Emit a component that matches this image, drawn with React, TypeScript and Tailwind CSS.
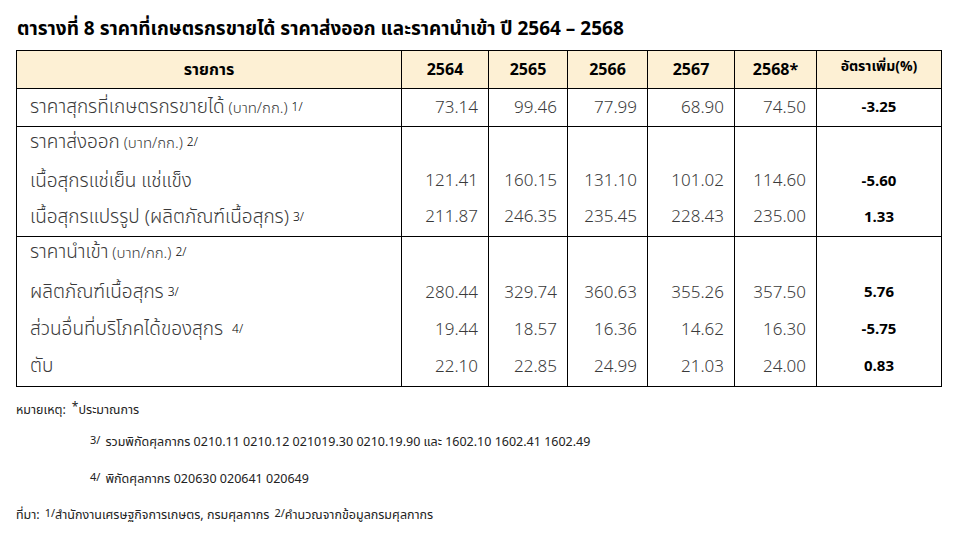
import React from 'react';

type Line = { label: React.ReactNode; values: string[]; rate: string; head?: boolean };

const unit = <span className="text-[15px]"> (บาท/กก.)</span>;
const sup = (t: string) => <sup className="text-[12px] ml-[4px] relative -top-[2px] text-black">{t}</sup>;

const row1: Line = {
  label: (
    <>
      ราคาสุกรที่เกษตรกรขายได้{unit}
      {sup('1/')}
    </>
  ),
  values: ['73.14', '99.46', '77.99', '68.90', '74.50'],
  rate: '-3.25',
};

const exportRows: Line[] = [
  { label: <>ราคาส่งออก{unit}{sup('2/')}</>, values: [], rate: '', head: true },
  { label: 'เนื้อสุกรแช่เย็น แช่แข็ง', values: ['121.41', '160.15', '131.10', '101.02', '114.60'], rate: '-5.60' },
  { label: <>เนื้อสุกรแปรรูป (ผลิตภัณฑ์เนื้อสุกร){sup('3/')}</>, values: ['211.87', '246.35', '235.45', '228.43', '235.00'], rate: '1.33' },
];

const importRows: Line[] = [
  { label: <>ราคานำเข้า{unit}{sup('2/')}</>, values: [], rate: '', head: true },
  { label: <>ผลิตภัณฑ์เนื้อสุกร{sup('3/')}</>, values: ['280.44', '329.74', '360.63', '355.26', '357.50'], rate: '5.76' },
  { label: <>ส่วนอื่นที่บริโภคได้ของสุกร {sup('4/')}</>, values: ['19.44', '18.57', '16.36', '14.62', '16.30'], rate: '-5.75' },
  { label: 'ตับ', values: ['22.10', '22.85', '24.99', '21.03', '24.00'], rate: '0.83' },
];

const years = ['2564', '2565', '2566', '2567', '2568*'];

// one section = one table row, each cell stacks its lines
function Section({ lines, last }: { lines: Line[]; last?: boolean }) {
  const h = last ? 'h-[37px]' : 'h-[36px]';
  const lineCls = (l: Line) =>
    l.head ? `${h} pb-[6px] flex items-center` : `${h} flex items-center`;
  const border = last ? 'border-b border-black' : 'border-b border-[#8c8c8c]';
  return (
    <tr>
      <td className={`border-l border-r border-black ${border} pl-[13px] align-top pt-[1px]`}>
        {lines.map((l, i) => (
          <div key={i} className={`${lineCls(l)} text-[19px] whitespace-nowrap`}>
            <span>{l.label}</span>
          </div>
        ))}
      </td>
      {years.map((_, c) => (
        <td key={c} className={`border-r border-black ${border} pr-[10px] align-top pt-[1px]`}>
          {lines.map((l, i) => (
            <div key={i} className={`${lineCls(l)} justify-end`}>
              {l.values[c] ?? ''}
            </div>
          ))}
        </td>
      ))}
      <td className={`border-r border-black ${border} align-top pt-[1px]`}>
        {lines.map((l, i) => (
          <div key={i} className={`${lineCls(l)} justify-center font-bold text-[15px] text-black`}>
            {l.rate}
          </div>
        ))}
      </td>
    </tr>
  );
}

export default function App() {
  return (
    <div
      className="w-[960px] h-[542px] bg-white px-[16px] pt-[19px] text-[#3a3a3a] overflow-hidden"
      style={{ fontFamily: '"Noto Sans Thai", "Noto Sans", "DejaVu Sans", sans-serif' }}
    >
      <h1 className="text-[19px] font-bold text-black leading-[22px] pl-[1px] whitespace-nowrap">
        ตารางที่ 8 ราคาที่เกษตรกรขายได้ ราคาส่งออก และราคานำเข้า ปี 2564 – 2568
      </h1>

      <table className="mt-[9px] w-[925px] table-fixed border-collapse text-[17px] font-light">
        <colgroup>
          <col className="w-[385px]" />
          <col className="w-[87px]" />
          <col className="w-[79px]" />
          <col className="w-[80px]" />
          <col className="w-[87px]" />
          <col className="w-[82px]" />
          <col className="w-[125px]" />
        </colgroup>
        <thead>
          <tr className="h-[38px] bg-[#fdf0d4] text-black font-bold text-[16px]">
            <th className="border border-black">รายการ</th>
            {years.map((y) => (
              <th key={y} className="border border-black">{y}</th>
            ))}
            <th className="border border-black text-[14px] pb-[6px]">อัตราเพิ่ม(%)</th>
          </tr>
        </thead>
        <tbody>
          <tr className="h-[38px]">
            <td className="border border-black pl-[13px] text-[19px] whitespace-nowrap pt-[2px]">{row1.label}</td>
            {row1.values.map((v, i) => (
              <td key={i} className="border border-black text-right pr-[10px] pt-[2px]">{v}</td>
            ))}
            <td className="border border-black text-center font-bold text-[15px] text-black pt-[2px]">{row1.rate}</td>
          </tr>
          <Section lines={exportRows} />
          <Section lines={importRows} last />
        </tbody>
      </table>

      <div className="text-[12.5px] text-[#222] mt-[14px]">
        <div className="h-[20px] flex items-center">
          หมายเหตุ:<sup className="text-[12px] ml-[6px] -top-[4px] relative">*</sup>ประมาณการ
        </div>
        <div className="h-[20px] flex items-center pl-[74px] mt-[12px]">
          <sup className="text-[11px] mr-[5px] relative -top-[2px]">3/</sup>
          รวมพิกัดศุลกากร 0210.11 0210.12 021019.30 0210.19.90 และ 1602.10 1602.41 1602.49
        </div>
        <div className="h-[20px] flex items-center pl-[74px] mt-[17px]">
          <sup className="text-[11px] mr-[5px] relative -top-[2px]">4/</sup>
          พิกัดศุลกากร 020630 020641 020649
        </div>
        <div className="h-[20px] flex items-center mt-[16px]">
          ที่มา:<sup className="text-[11px] ml-[5px] relative -top-[2px]">1/</sup>
          สำนักงานเศรษฐกิจการเกษตร, กรมศุลกากร
          <sup className="text-[11px] ml-[5px] relative -top-[2px]">2/</sup>
          คำนวณจากข้อมูลกรมศุลกากร
        </div>
      </div>
    </div>
  );
}
